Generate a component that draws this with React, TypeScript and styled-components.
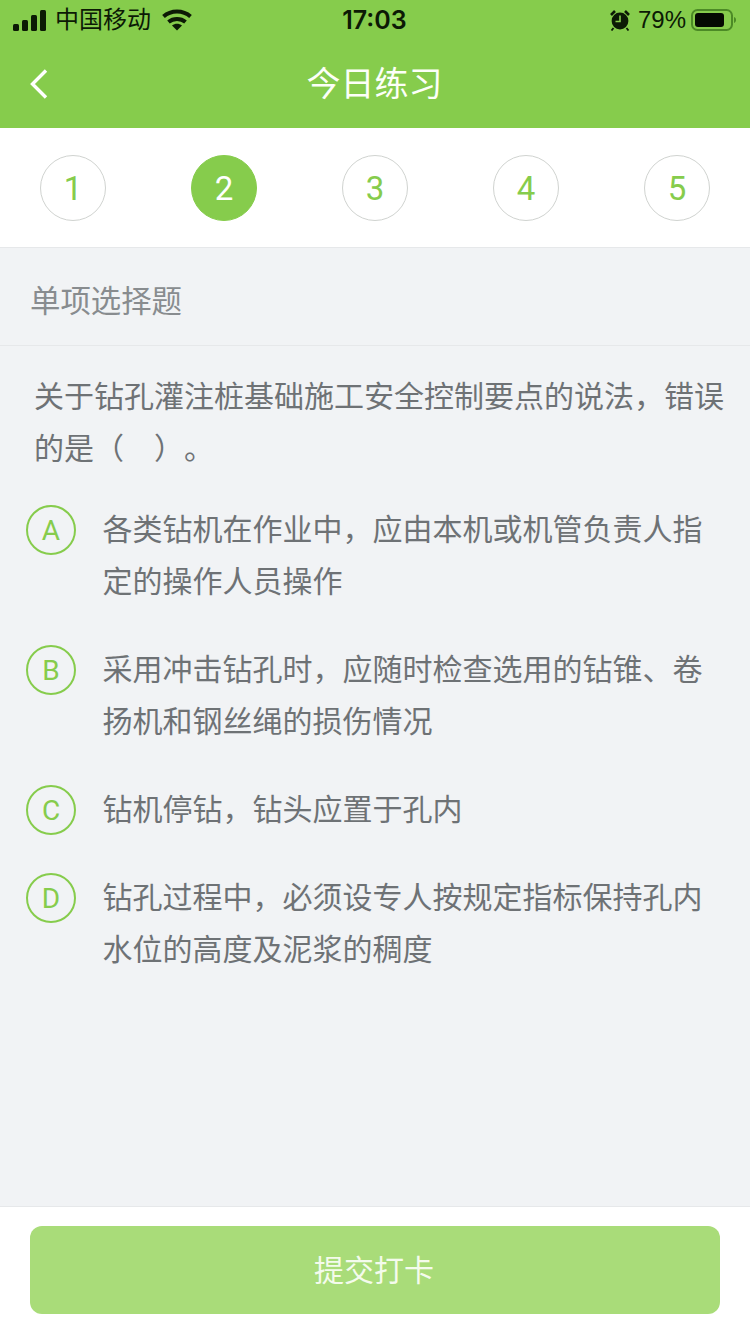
import React, { useState } from 'react';
import styled, { createGlobalStyle } from 'styled-components';

const options = [
  { key: 'A', text: '各类钻机在作业中，应由本机或机管负责人指定的操作人员操作' },
  { key: 'B', text: '采用冲击钻孔时，应随时检查选用的钻锥、卷扬机和钢丝绳的损伤情况' },
  { key: 'C', text: '钻机停钻，钻头应置于孔内' },
  { key: 'D', text: '钻孔过程中，必须设专人按规定指标保持孔内水位的高度及泥浆的稠度' },
];

export default function App() {
  const [current, setCurrent] = useState(2);
  return (
    <Page>
      <GlobalStyle />
      <Header>
        <StatusBar>
          <StatusLeft>
            <svg width="34" height="21" viewBox="0 0 34 21">
              <rect x="0" y="14" width="6" height="7" rx="1.500" fill="#0c1a05" />
              <rect x="9" y="10" width="6" height="11" rx="1.500" fill="#0c1a05" />
              <rect x="18" y="5" width="6" height="16" rx="1.500" fill="#0c1a05" />
              <rect x="27" y="0" width="6" height="21" rx="1.500" fill="#0c1a05" />
            </svg>
            <Carrier>中国移动</Carrier>
            <WifiIcon width="30" height="22" viewBox="0 0 30 22">
              <path d="M1.500 7.500C9 .8 21 .8 28.500 7.500" fill="none" stroke="#0c1a05" strokeWidth="4" />
              <path d="M6.500 13c4.800-4 12.200-4 17 0" fill="none" stroke="#0c1a05" strokeWidth="4" />
              <path d="M10 16.500c3-2.400 7-2.400 10 0L15 21.500z" fill="#0c1a05" />
            </WifiIcon>
          </StatusLeft>
          <Clock>17:03</Clock>
          <StatusRight>
            <svg width="20" height="22" viewBox="0 0 20 22">
              <circle cx="10" cy="12" r="8.400" fill="#0c1a05" />
              <path d="M10 6.500V12.500H5.500" fill="none" stroke="#86cc4c" strokeWidth="1.600" />
              <path d="M1 6l4-4M19 6l-4-4" stroke="#0c1a05" strokeWidth="2.600" />
              <path d="M3.500 19l-2 2.500M16.500 19l2 2.500" stroke="#0c1a05" strokeWidth="1.800" />
            </svg>
            <Battery>79%</Battery>
            <svg width="45" height="24" viewBox="0 0 45 24">
              <rect x="1" y="2" width="40" height="20" rx="5.500" fill="none" stroke="#4c8a26" strokeWidth="2" />
              <rect x="4" y="5" width="29" height="14" rx="3" fill="#050a02" />
              <path d="M43 9c1.300.4 2 1.600 2 3s-.7 2.600-2 3z" fill="#4c8a26" />
            </svg>
          </StatusRight>
        </StatusBar>
        <NavBar>
          <BackButton aria-label="返回">
            <svg width="20" height="32" viewBox="0 0 20 32">
              <path d="M17 2.500 3.500 16 17 29.500" fill="none" stroke="#fff" strokeWidth="3.400" />
            </svg>
          </BackButton>
          <NavTitle>今日练习</NavTitle>
        </NavBar>
      </Header>
      <StepList>
        {[1, 2, 3, 4, 5].map((n) => (
          <StepCircle key={n} $active={n === current} onClick={() => setCurrent(n)}>
            {n}
          </StepCircle>
        ))}
      </StepList>
      <Main>
        <SectionTitle>单项选择题</SectionTitle>
        <Question>关于钻孔灌注桩基础施工安全控制要点的说法，错误的是（　）。</Question>
        <OptionList>
          {options.map((item) => (
            <OptionRow key={item.key}>
              <OptionBadge>{item.key}</OptionBadge>
              <OptionText>{item.text}</OptionText>
            </OptionRow>
          ))}
        </OptionList>
      </Main>
      <Footer>
        <SubmitButton>提交打卡</SubmitButton>
      </Footer>
    </Page>
  );
}

const GlobalStyle = createGlobalStyle`
  html, body {
    margin: 0;
    padding: 0;
  }
  body {
    font-family: "Liberation Sans", "Noto Sans CJK SC", sans-serif;
  }
  button {
    font-family: inherit;
    border: none;
    padding: 0;
  }
`;

const Page = styled.div`
  width: 750px;
  height: 1334px;
  display: flex;
  flex-direction: column;
  overflow: hidden;
  background-color: #f1f3f5;
`;
const Header = styled.header`
  height: 128px;
  background-color: #86cc4c;
`;
const StatusBar = styled.div`
  height: 40px;
  padding: 0 14px 0 13px;
  display: flex;
  align-items: center;
  justify-content: space-between;
  color: #0c1a05;
`;
const StatusLeft = styled.div`
  display: flex;
  align-items: center;
  width: 270px;
  gap: 8px;
`;
const WifiIcon = styled.svg`
  margin-left: 3px;
`;
const Carrier = styled.span`
  font-size: 24px;
  line-height: 34px;
`;
const Clock = styled.span`
  font-family: "Inter", "Liberation Sans", sans-serif;
  font-size: 25px;
  font-weight: 600;
`;
const StatusRight = styled.div`
  display: flex;
  align-items: center;
  justify-content: flex-end;
  width: 270px;
  gap: 8px;
`;
const Battery = styled.span`
  font-size: 24px;
  margin-right: -3px;
`;
const NavBar = styled.div`
  height: 88px;
  display: flex;
  align-items: center;
  justify-content: center;
  position: relative;
`;
const BackButton = styled.button`
  position: absolute;
  left: 29px;
  top: 28px;
  width: 20px;
  height: 32px;
  background: none;
  cursor: pointer;
`;
const NavTitle = styled.h1`
  margin: 0 1px 6px 0;
  font-size: 34px;
  font-weight: 400;
  color: #fcfff8;
`;
const StepList = styled.div`
  height: 119px;
  padding: 0 40px;
  display: flex;
  align-items: center;
  justify-content: space-between;
  background-color: #fff;
  border-bottom: 1px solid #e6e8ea;
`;
const StepCircle = styled.button<{ $active: boolean }>`
  width: 66px;
  height: 66px;
  margin-top: 1px;
  border-radius: 50%;
  box-sizing: border-box;
  border: 1px solid ${({ $active }) => ($active ? '#86cc4c' : '#d0d3d0')};
  background-color: ${({ $active }) => ($active ? '#86cc4c' : '#fff')};
  color: ${({ $active }) => ($active ? '#fff' : '#86cc4c')};
  font-family: "Roboto", "Liberation Sans", sans-serif;
  font-size: 33px;
  font-weight: 400;
  cursor: pointer;
`;
const Main = styled.main`
  flex: 1;
  display: flex;
  flex-direction: column;
`;
const SectionTitle = styled.h2`
  margin: 0;
  height: 98px;
  padding: 5px 0 0 30px;
  box-sizing: border-box;
  display: flex;
  align-items: center;
  font-size: 30.400px;
  font-weight: 400;
  color: #888c8f;
  border-bottom: 1px solid #e6e8ea;
`;
const Question = styled.p`
  margin: 25px 0 0;
  padding: 0 20px 0 34px;
  font-size: 30px;
  line-height: 52px;
  color: #6e7275;
  font-feature-settings: "chws" 0;
  text-spacing-trim: space-all;
`;
const OptionList = styled.div`
  margin-top: 29px;
  padding: 0 26px;
  display: flex;
  flex-direction: column;
  gap: 36px;
`;
const OptionRow = styled.div`
  display: flex;
  align-items: flex-start;
  gap: 26.500px;
`;
const OptionBadge = styled.span`
  flex: none;
  width: 50px;
  height: 50px;
  margin-top: 1px;
  padding-top: 1px;
  box-sizing: border-box;
  border: 2px solid #86cc4c;
  border-radius: 50%;
  display: flex;
  align-items: center;
  justify-content: center;
  font-family: "Roboto", "Liberation Sans", sans-serif;
  font-size: 28px;
  font-weight: 400;
  color: #86cc4c;
`;
const OptionText = styled.p`
  margin: 0;
  width: 600px;
  font-size: 30px;
  line-height: 52px;
  color: #6e7275;
`;
const Footer = styled.footer`
  height: 128px;
  box-sizing: border-box;
  padding: 19px 30px 0;
  background-color: #fff;
  border-top: 1px solid #e6e8ea;
`;
const SubmitButton = styled.button`
  width: 100%;
  height: 88px;
  padding: 0 2px 4px 0;
  border-radius: 12px;
  background-color: #a9dc79;
  color: #f4fbec;
  font-size: 30px;
  cursor: pointer;
`;
